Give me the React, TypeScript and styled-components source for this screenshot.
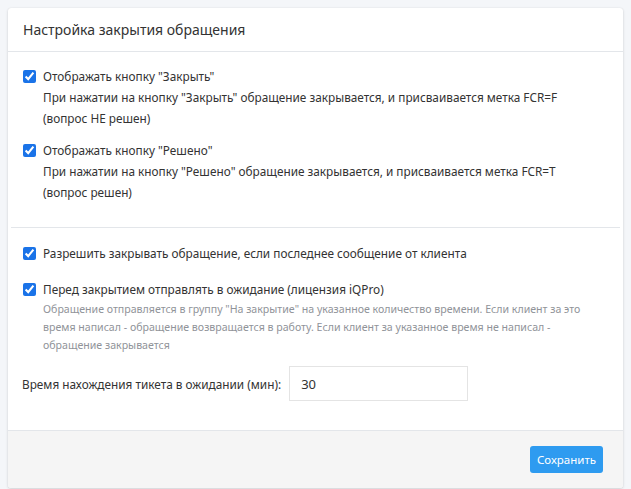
import styled, { createGlobalStyle } from 'styled-components';

const GlobalStyle = createGlobalStyle`
  html, body {
    margin: 0;
    padding: 0;
    background: #f4f6f9;
    font-family: 'Noto Sans', 'Open Sans', sans-serif;
    color: #333;
  }
`;

const Page = styled.div`
  padding: 8px;
  width: 615px;
`;

const Card = styled.section`
  background: #fff;
  border-radius: 3px;
  box-shadow: 0 0 1px rgba(0, 0, 0, 0.12), 0 1px 3px rgba(0, 0, 0, 0.14);
  overflow: hidden;
`;

const CardHeader = styled.header`
  height: 44px;
  display: flex;
  align-items: center;
  padding: 0 15px;
  border-bottom: 1px solid #e3e6ea;
  box-sizing: border-box;
`;

const Title = styled.h2`
  margin: 0;
  font-size: 14px;
  font-weight: 400;
  color: #333;
`;

const Body = styled.div`
  padding: 14px 3px 29px;
`;

const Group = styled.div<{ gap: number }>`
  padding: 0 11px;
  display: flex;
  flex-direction: column;
  gap: ${(p) => p.gap}px;
`;

const Divider = styled.hr`
  border: 0;
  border-top: 1px solid #e3e6ea;
  margin: 24px 0 15px;
`;

const Option = styled.label`
  display: flex;
  align-items: flex-start;
  gap: 7px;
  font-size: 11.8px;
  line-height: 21px;
  color: #333;
`;

const Check = styled.input.attrs({ type: 'checkbox' })`
  width: 13px;
  height: 13px;
  margin: 4px 0 0 1px;
  accent-color: #1a73e8;
  flex: none;
`;

const Hint = styled.div`
  max-width: 548px;
  font-size: 10.6px;
  line-height: 18px;
  color: #909399;
`;

const FieldRow = styled.div`
  display: flex;
  align-items: center;
  gap: 8px;
  padding: 0 11px;
  margin-top: 12px;
  font-size: 11.8px;
`;

const Input = styled.input`
  width: 179px;
  height: 35px;
  box-sizing: border-box;
  border: 1px solid #e4e4e4;
  padding: 0 11px;
  font: inherit;
  font-size: 13px;
  color: #333;
  outline: none;
`;

const Footer = styled.footer`
  height: 57px;
  background: #f5f5f5;
  border-top: 1px solid #e3e6ea;
  display: flex;
  align-items: center;
  justify-content: flex-end;
  padding: 0 20px;
`;

const SaveButton = styled.button`
  height: 27px;
  padding: 0 7px;
  background: #2e9bf0;
  color: #fff;
  border: 0;
  border-radius: 3px;
  font: inherit;
  font-size: 11.5px;
  cursor: pointer;
`;

const App = () => {
  return (
    <>
      <GlobalStyle />
      <Page>
        <Card>
          <CardHeader>
            <Title>Настройка закрытия обращения</Title>
          </CardHeader>
          <Body>
            <Group gap={11}>
              <Option>
                <Check defaultChecked />
                <span>
                  Отображать кнопку "Закрыть"
                  <br />
                  При нажатии на кнопку "Закрыть" обращение закрывается, и присваивается метка FCR=F
                  <br />
                  (вопрос НЕ решен)
                </span>
              </Option>
              <Option>
                <Check defaultChecked />
                <span>
                  Отображать кнопку "Решено"
                  <br />
                  При нажатии на кнопку "Решено" обращение закрывается, и присваивается метка FCR=T
                  <br />
                  (вопрос решен)
                </span>
              </Option>
            </Group>
            <Divider />
            <Group gap={15}>
              <Option>
                <Check defaultChecked />
                <span>Разрешить закрывать обращение, если последнее сообщение от клиента</span>
              </Option>
              <Option>
                <Check defaultChecked />
                <div>
                  Перед закрытием отправлять в ожидание (лицензия iQPro)
                  <Hint>
                    Обращение отправляется в группу "На закрытие" на указанное количество времени.
                    Если клиент за это время написал - обращение возвращается в работу. Если клиент
                    за указанное время не написал - обращение закрывается
                  </Hint>
                </div>
              </Option>
            </Group>
            <FieldRow>
              <span>Время нахождения тикета в ожидании (мин):</span>
              <Input defaultValue="30" />
            </FieldRow>
          </Body>
          <Footer>
            <SaveButton>Сохранить</SaveButton>
          </Footer>
        </Card>
      </Page>
    </>
  );
};

export default App;
